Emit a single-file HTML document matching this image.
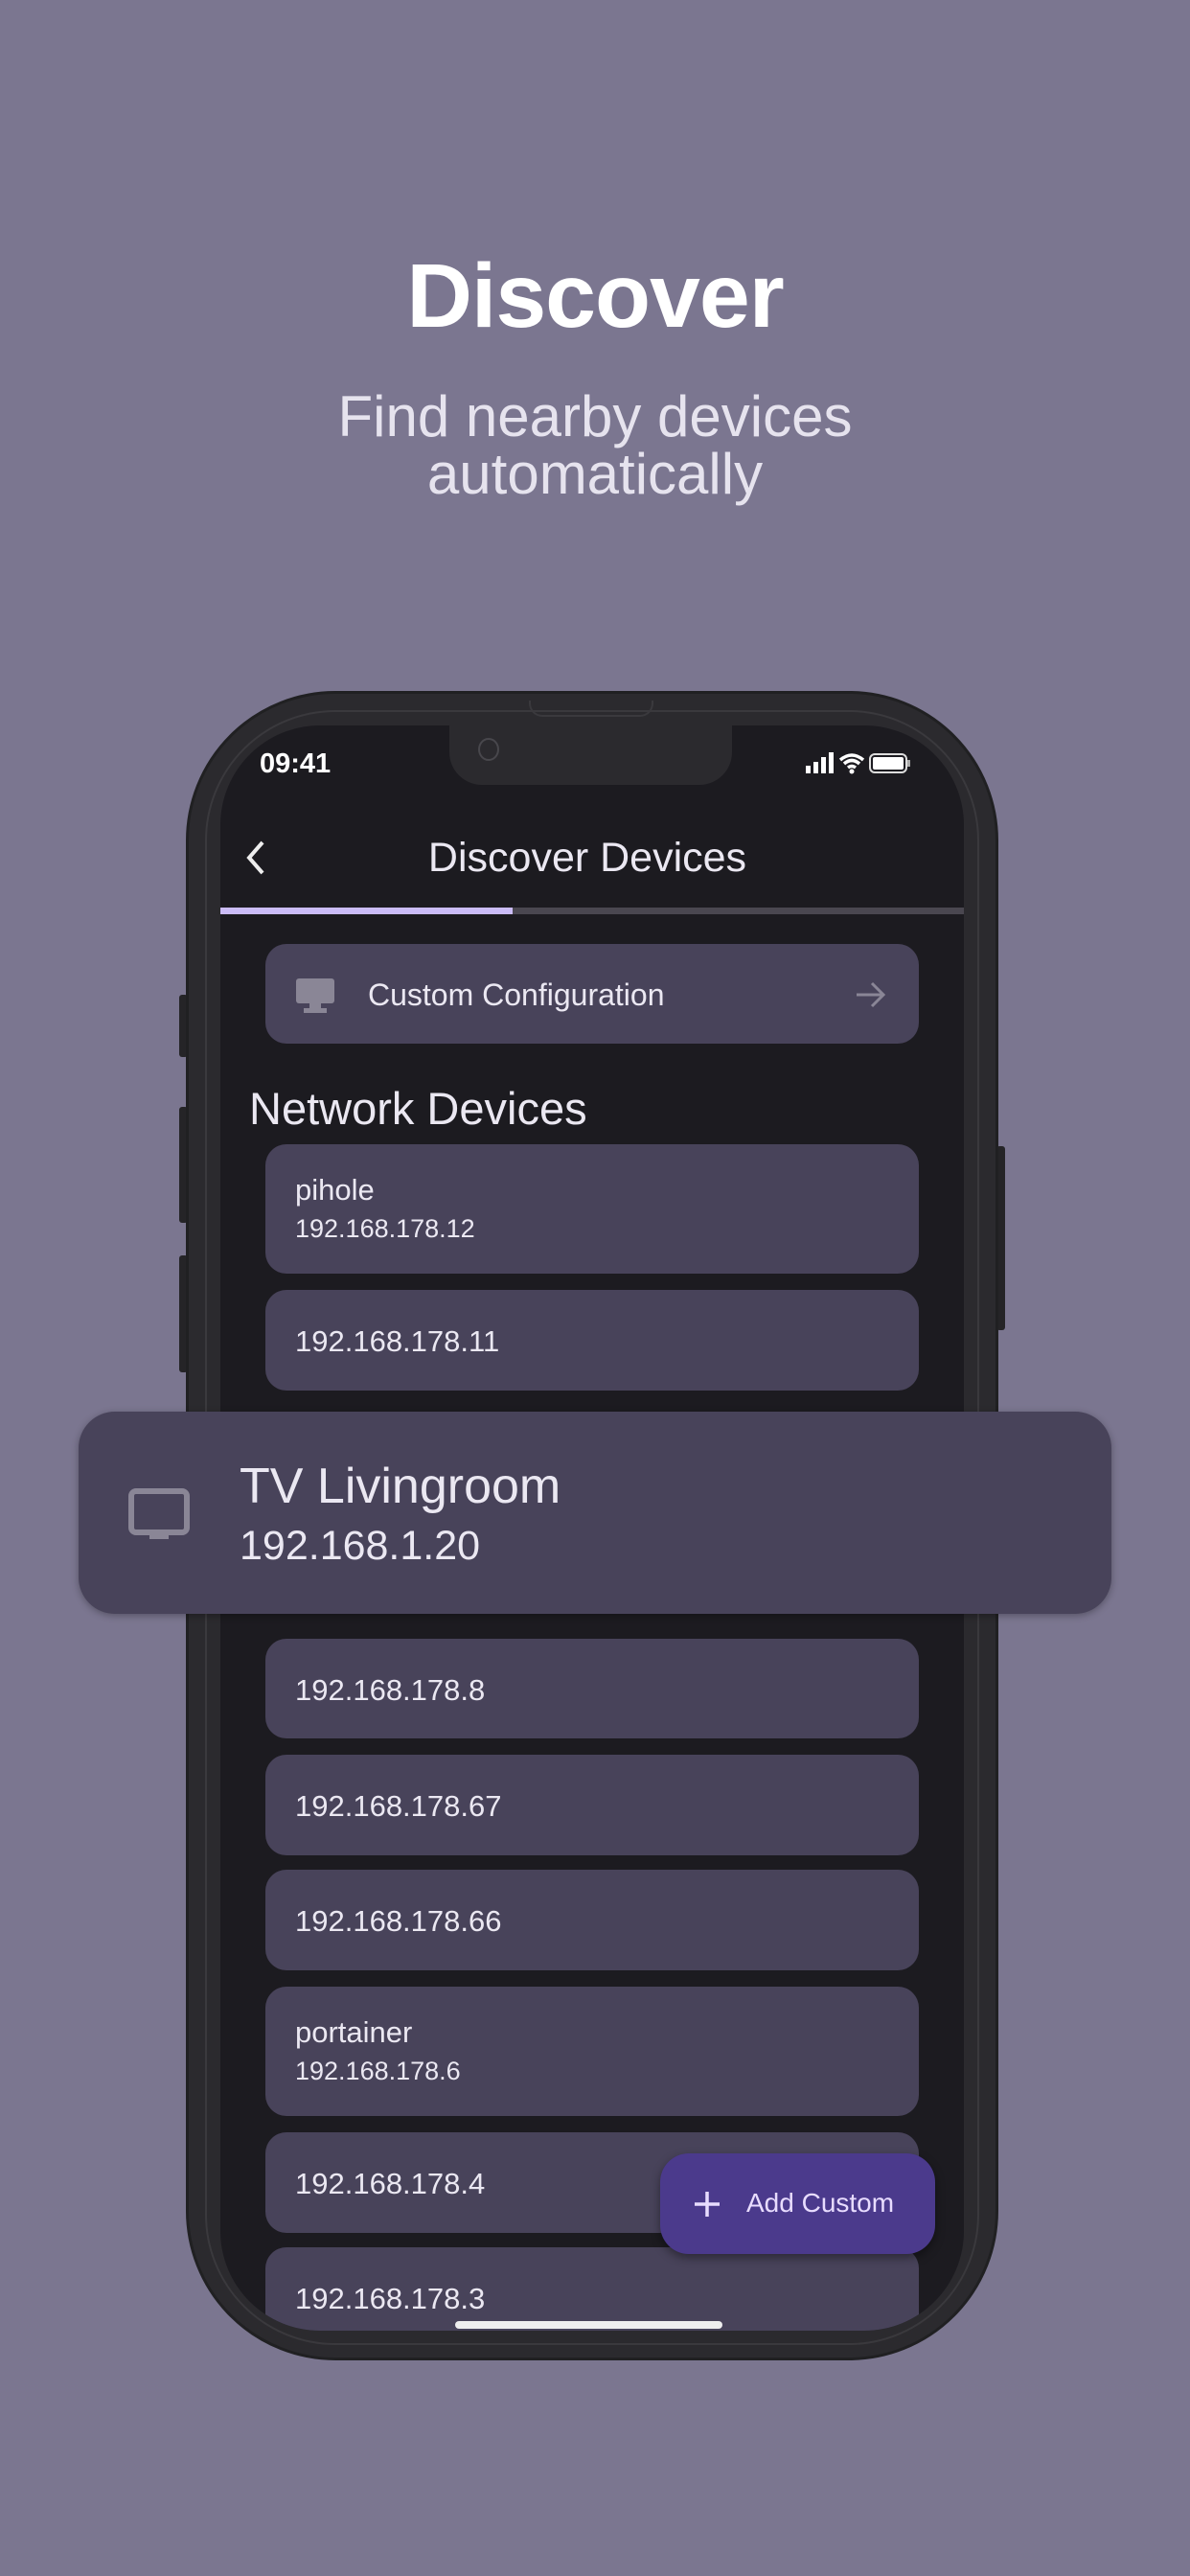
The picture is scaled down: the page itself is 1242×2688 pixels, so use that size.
<!DOCTYPE html>
<html><head><meta charset="utf-8"><style>
*{margin:0;padding:0;box-sizing:border-box}
body{width:1242px;height:2688px;background:#7b7690;position:relative;overflow:hidden;font-family:"Liberation Sans",sans-serif}
.a{position:absolute}
.h1{left:0;width:1242px;text-align:center;top:255px;font-size:95px;font-weight:bold;color:#fff;letter-spacing:-1px}
.sub{left:0;width:1242px;text-align:center;top:405px;font-size:60px;color:#e6e3ee;line-height:60px}
.phone{left:194px;top:721px;width:848px;height:1742px;border-radius:156px;background:#2b2a2e;border:3px solid #202022}
.inner{left:214px;top:741px;width:808px;height:1706px;border-radius:136px;border:2px solid #3a393d}
.screen{left:230px;top:757px;width:776px;height:1675px;border-radius:104px;background:#1c1b20;overflow:hidden}
.btn{background:#252427}
.card{position:absolute;left:47px;width:682px;background:#48435a;border-radius:22px;color:#ebe8f2}
.t1{position:absolute;left:31px;font-size:31px}
.t2{position:absolute;left:31px;font-size:27px}
</style></head><body>
<div class="a h1">Discover</div>
<div class="a sub">Find nearby devices<br>automatically</div>
<div class="a btn" style="left:187px;top:1038px;width:9px;height:65px;border-radius:3px"></div>
<div class="a btn" style="left:187px;top:1155px;width:9px;height:121px;border-radius:3px"></div>
<div class="a btn" style="left:187px;top:1310px;width:9px;height:122px;border-radius:3px"></div>
<div class="a btn" style="left:1040px;top:1196px;width:9px;height:192px;border-radius:3px"></div>
<div class="a phone"></div>
<div class="a inner"></div>
<div class="a" style="left:552px;top:731px;width:130px;height:17px;border:2px solid #3a393d;border-top:none;border-radius:0 0 14px 14px"></div>
<div class="a screen">
  <div class="a" style="left:239px;top:0;width:295px;height:62px;background:#2b2a2e;border-radius:0 0 34px 34px"></div>
  <div class="a" style="left:269px;top:13px;width:22px;height:24px;border:2px solid #48474c;border-radius:50%"></div>
  <div class="a" style="left:41px;top:24px;font-size:29px;color:#fff;font-weight:bold">09:41</div>
  <svg class="a" style="left:611px;top:28px" width="110" height="24" viewBox="0 0 110 24">
    <rect x="0" y="14" width="5" height="8" fill="#fff"/><rect x="8" y="10" width="5" height="12" fill="#fff"/><rect x="16" y="5" width="5" height="17" fill="#fff"/><rect x="24" y="0" width="5" height="22" fill="#fff"/>
    <path d="M36 8 Q48 -2 60 8 M40 12 Q48 5 56 12 M44 16 Q48 13 52 16" stroke="#fff" stroke-width="3.5" fill="none"/><circle cx="48" cy="20" r="2.5" fill="#fff"/>
    <rect x="67" y="2" width="38" height="19" rx="5" fill="none" stroke="#ddd" stroke-width="2"/><rect x="70" y="5" width="32" height="13" rx="2" fill="#fff"/><rect x="106" y="8" width="3" height="7" fill="#aaa"/>
  </svg>
  <svg class="a" style="left:22px;top:118px" width="30" height="40" viewBox="0 0 30 40"><path d="M22 4 L8 20 L22 36" stroke="#eee" stroke-width="4" fill="none"/></svg>
  <div class="a" style="left:0;width:766px;text-align:center;top:114px;font-size:43px;color:#ebe8f2">Discover Devices</div>
  <div class="a" style="left:0;top:190px;width:776px;height:7px;background:#4a4750"></div>
  <div class="a" style="left:0;top:190px;width:305px;height:7px;background:#cbbcf7"></div>
  <div class="card" style="top:228px;height:104px">
    <svg class="a" style="left:30px;top:34px" width="44" height="40" viewBox="0 0 44 40"><rect x="2" y="2" width="40" height="26" rx="3" fill="#8a8696"/><rect x="16" y="28" width="12" height="6" fill="#8a8696"/><rect x="10" y="33" width="24" height="5" fill="#8a8696"/></svg>
    <div class="t1" style="left:107px;top:35px;font-size:32px">Custom Configuration</div>
    <svg class="a" style="left:615px;top:38px" width="34" height="30" viewBox="0 0 34 30"><path d="M2 15 H30 M18 3 L30 15 L18 27" stroke="#8a8696" stroke-width="3" fill="none"/></svg>
  </div>
  <div class="a" style="left:30px;top:372px;font-size:47px;color:#ebe8f2">Network Devices</div>
  <div class="card" style="top:437px;height:135px"><div class="t1" style="top:30px">pihole</div><div class="t2" style="top:73px">192.168.178.12</div></div>
  <div class="card" style="top:589px;height:105px"><div class="t1" style="top:36px">192.168.178.11</div></div>
  <div class="card" style="top:953px;height:104px"><div class="t1" style="top:36px">192.168.178.8</div></div>
  <div class="card" style="top:1074px;height:105px"><div class="t1" style="top:36px">192.168.178.67</div></div>
  <div class="card" style="top:1194px;height:105px"><div class="t1" style="top:36px">192.168.178.66</div></div>
  <div class="card" style="top:1316px;height:135px"><div class="t1" style="top:30px">portainer</div><div class="t2" style="top:73px">192.168.178.6</div></div>
  <div class="card" style="top:1468px;height:105px"><div class="t1" style="top:36px">192.168.178.4</div></div>
  <div class="card" style="top:1588px;height:120px"><div class="t1" style="top:36px">192.168.178.3</div></div>
  <div class="a" style="left:459px;top:1490px;width:287px;height:105px;background:#4b3a8c;border-radius:30px;box-shadow:0 4px 10px rgba(0,0,0,.4)"></div>
  <svg class="a" style="left:494px;top:1529px" width="28" height="28" viewBox="0 0 28 28"><path d="M14 1 V27 M1 14 H27" stroke="#e8dcff" stroke-width="3.5"/></svg>
  <div class="a" style="left:549px;top:1526px;font-size:28px;color:#e8dcff">Add Custom</div>
  <div class="a" style="left:245px;top:1665px;width:279px;height:8px;border-radius:4px;background:#eee"></div>
</div>
<div class="a" style="left:82px;top:1473px;width:1078px;height:211px;border-radius:38px;background:#48435a;box-shadow:0 2px 8px rgba(0,0,0,.3)">
  <svg class="a" style="left:52px;top:80px" width="64" height="56" viewBox="0 0 64 56"><rect x="3" y="3" width="58" height="43" rx="5" fill="none" stroke="#8a8696" stroke-width="6"/><rect x="22" y="46" width="20" height="7" fill="#8a8696"/></svg>
  <div class="a" style="left:168px;top:48px;font-size:52px;color:#ebe8f2">TV Livingroom</div>
  <div class="a" style="left:168px;top:116px;font-size:43px;color:#ebe8f2">192.168.1.20</div>
</div>
</body></html>
